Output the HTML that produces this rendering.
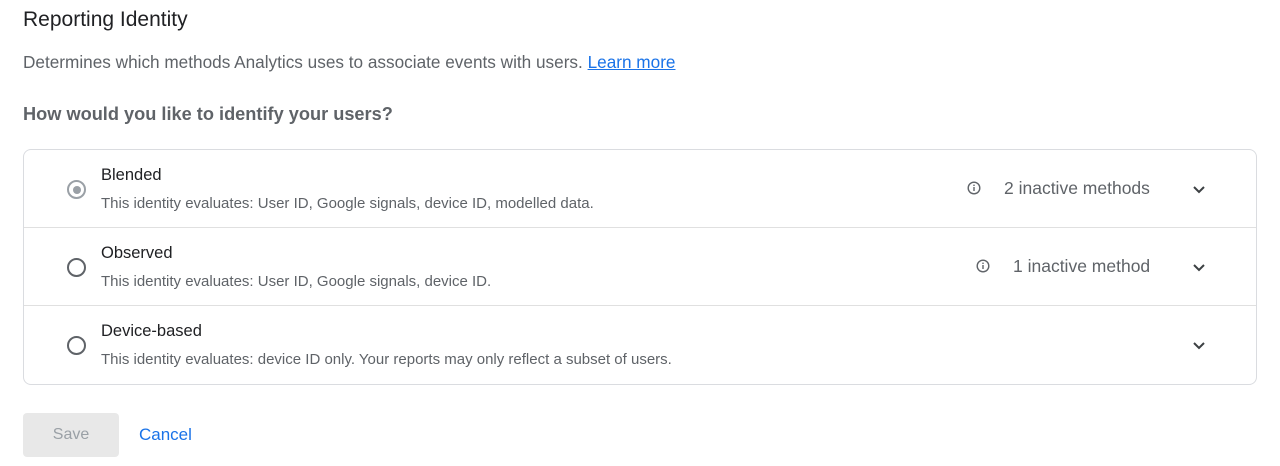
<!DOCTYPE html>
<html><head><style>
body{margin:0;width:1280px;height:466px;background:#fff;font-family:"Liberation Sans",sans-serif;color:#3c4043;position:relative;overflow:hidden}
.a{position:absolute;white-space:nowrap}
.card{position:absolute;left:23px;top:149px;width:1232px;height:234px;border:1px solid #dadce0;border-radius:8px}
.row{position:absolute;left:0;width:1232px;height:78px;border-top:1px solid #e0e0e0}
.radio{position:absolute;left:43px;top:30px;width:19px;height:19px;border:2px solid #5f6368;border-radius:50%;box-sizing:border-box}
.t{position:absolute;left:77px;top:16px;font-size:16.5px;color:#202124}
.d{position:absolute;left:77px;top:45px;font-size:15px;color:#5f6368}
.m{position:absolute;top:28px;font-size:17.5px;color:#5f6368}
.i{position:absolute;top:31px;width:14px;height:14px}
.c{position:absolute;left:1168px;top:35px}
</style></head><body>
<div class="a" style="left:23px;top:8px;font-size:21px;color:#202124">Reporting Identity</div>
<div class="a" style="left:23px;top:52px;font-size:17.2px;color:#5f6368">Determines which methods Analytics uses to associate events with users. <span style="color:#1a73e8;text-decoration:underline">Learn more</span></div>
<div class="a" style="left:23px;top:104px;font-size:18.2px;font-weight:bold;color:#5f6368">How would you like to identify your users?</div>
<div class="card">
 <div class="row" style="top:0;border-top:none">
  <div class="radio" style="border-color:#9aa0a6"><div style="position:absolute;left:3.5px;top:3.5px;width:8px;height:8px;border-radius:50%;background:#9aa0a6"></div></div>
  <div class="t">Blended</div><div class="d">This identity evaluates: User ID, Google signals, device ID, modelled data.</div>
  <svg class="i" style="left:943px" viewBox="0 0 14 14"><circle cx="7" cy="7" r="5.8" fill="none" stroke="#5f6368" stroke-width="1.4"/><rect x="6.3" y="6" width="1.4" height="4" fill="#5f6368"/><rect x="6.3" y="3.6" width="1.4" height="1.4" fill="#5f6368"/></svg>
  <div class="m" style="left:980px">2 inactive methods</div>
  <svg class="c" width="14" height="10" viewBox="0 0 14 10"><path d="M2 2l5 5 5-5" fill="none" stroke="#3c4043" stroke-width="2"/></svg>
 </div>
 <div class="row" style="top:77px">
  <div class="radio"></div>
  <div class="t">Observed</div><div class="d">This identity evaluates: User ID, Google signals, device ID.</div>
  <svg class="i" style="left:952px" viewBox="0 0 14 14"><circle cx="7" cy="7" r="5.8" fill="none" stroke="#5f6368" stroke-width="1.4"/><rect x="6.3" y="6" width="1.4" height="4" fill="#5f6368"/><rect x="6.3" y="3.6" width="1.4" height="1.4" fill="#5f6368"/></svg>
  <div class="m" style="left:989px">1 inactive method</div>
  <svg class="c" width="14" height="10" viewBox="0 0 14 10"><path d="M2 2l5 5 5-5" fill="none" stroke="#3c4043" stroke-width="2"/></svg>
 </div>
 <div class="row" style="top:155px">
  <div class="radio"></div>
  <div class="t">Device-based</div><div class="d">This identity evaluates: device ID only. Your reports may only reflect a subset of users.</div>
  <svg class="c" width="14" height="10" viewBox="0 0 14 10"><path d="M2 2l5 5 5-5" fill="none" stroke="#3c4043" stroke-width="2"/></svg>
 </div>
</div>
<div class="a" style="left:23px;top:413px;width:96px;height:44px;background:#e8e8e8;border-radius:4px;font-size:16px;color:#9aa0a6;line-height:44px;text-align:center">Save</div>
<div class="a" style="left:139px;top:425px;font-size:17px;color:#1a73e8">Cancel</div>
</body></html>
